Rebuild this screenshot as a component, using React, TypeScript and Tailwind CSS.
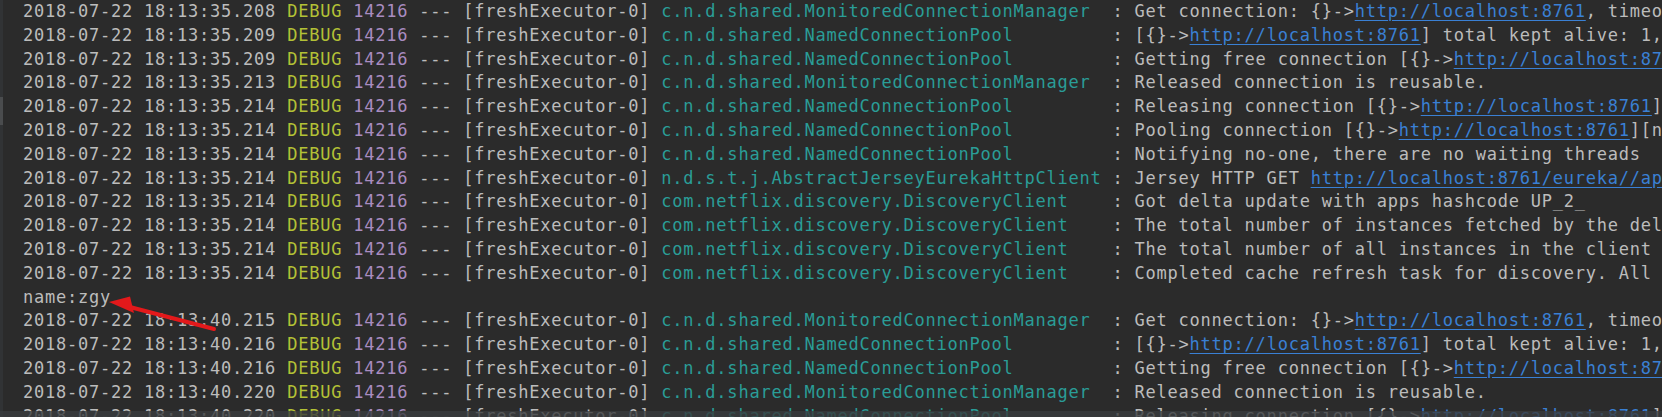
import React from "react";

type Part = string | { link: string };

type Row = {
  ts?: string;
  logger?: string;
  msg?: Part[];
  plain?: string;
};

const L = (s: string) => ({ link: s });

const rows: Row[] = [
  { ts: "2018-07-22 18:13:35.208", logger: "c.n.d.shared.MonitoredConnectionManager", msg: ["Get connection: {}->", L("http://localhost:8761"), ", timeout = 5000"] },
  { ts: "2018-07-22 18:13:35.209", logger: "c.n.d.shared.NamedConnectionPool", msg: ["[{}->", L("http://localhost:8761"), "] total kept alive: 1, total issued: 0, total allocated: 1 out of 200"] },
  { ts: "2018-07-22 18:13:35.209", logger: "c.n.d.shared.NamedConnectionPool", msg: ["Getting free connection [{}->", L("http://localhost:8761"), "][null]"] },
  { ts: "2018-07-22 18:13:35.213", logger: "c.n.d.shared.MonitoredConnectionManager", msg: ["Released connection is reusable."] },
  { ts: "2018-07-22 18:13:35.214", logger: "c.n.d.shared.NamedConnectionPool", msg: ["Releasing connection [{}->", L("http://localhost:8761"), "][null]"] },
  { ts: "2018-07-22 18:13:35.214", logger: "c.n.d.shared.NamedConnectionPool", msg: ["Pooling connection [{}->", L("http://localhost:8761"), "][null]; keep alive indefinitely"] },
  { ts: "2018-07-22 18:13:35.214", logger: "c.n.d.shared.NamedConnectionPool", msg: ["Notifying no-one, there are no waiting threads"] },
  { ts: "2018-07-22 18:13:35.214", logger: "n.d.s.t.j.AbstractJerseyEurekaHttpClient", msg: ["Jersey HTTP GET ", L("http://localhost:8761/eureka//apps/delta?"), "; statusCode=200"] },
  { ts: "2018-07-22 18:13:35.214", logger: "com.netflix.discovery.DiscoveryClient", msg: ["Got delta update with apps hashcode UP_2_"] },
  { ts: "2018-07-22 18:13:35.214", logger: "com.netflix.discovery.DiscoveryClient", msg: ["The total number of instances fetched by the delta processor : 0"] },
  { ts: "2018-07-22 18:13:35.214", logger: "com.netflix.discovery.DiscoveryClient", msg: ["The total number of all instances in the client now is 2"] },
  { ts: "2018-07-22 18:13:35.214", logger: "com.netflix.discovery.DiscoveryClient", msg: ["Completed cache refresh task for discovery. All Apps hash code is Local region apps hashcode: UP_2_"] },
  { plain: "name:zgy" },
  { ts: "2018-07-22 18:13:40.215", logger: "c.n.d.shared.MonitoredConnectionManager", msg: ["Get connection: {}->", L("http://localhost:8761"), ", timeout = 5000"] },
  { ts: "2018-07-22 18:13:40.216", logger: "c.n.d.shared.NamedConnectionPool", msg: ["[{}->", L("http://localhost:8761"), "] total kept alive: 1, total issued: 0, total allocated: 1 out of 200"] },
  { ts: "2018-07-22 18:13:40.216", logger: "c.n.d.shared.NamedConnectionPool", msg: ["Getting free connection [{}->", L("http://localhost:8761"), "][null]"] },
  { ts: "2018-07-22 18:13:40.220", logger: "c.n.d.shared.MonitoredConnectionManager", msg: ["Released connection is reusable."] },
  { ts: "2018-07-22 18:13:40.220", logger: "c.n.d.shared.NamedConnectionPool", msg: ["Releasing connection [{}->", L("http://localhost:8761"), "][null]"] },
];

function LogRow({ row }: { row: Row }) {
  if (row.plain !== undefined) {
    return <div className="h-[23.8px] leading-[23.8px] whitespace-pre text-[#bcbcbc]">{row.plain}</div>;
  }
  return (
    <div className="h-[23.8px] leading-[23.8px] whitespace-pre">
      <span className="text-[#bcbcbc]">{row.ts} </span>
      <span className="text-[#b3c136]">DEBUG</span>
      <span> </span>
      <span className="text-[#a98cc1]">14216</span>
      <span className="text-[#bcbcbc]"> --- [freshExecutor-0] </span>
      <span className="text-[#2a9d97]">{(row.logger || "").padEnd(40, " ")}</span>
      <span className="text-[#bcbcbc]"> : </span>
      {row.msg?.map((p, i) =>
        typeof p === "string" ? (
          <span key={i} className="text-[#bcbcbc]">{p}</span>
        ) : (
          <span key={i} className="text-[#3a80d4] underline underline-offset-[3px] decoration-[#3a80d4]">{p.link}</span>
        )
      )}
    </div>
  );
}

export default function App() {
  return (
    <div className="relative w-[1662px] h-[417px] overflow-hidden bg-[#2b2b2b] flex">
      <div className="w-[3px] h-full bg-[#313335] flex flex-col shrink-0">
        <div className="h-[97px]" />
        <div className="h-[28px] bg-[#4a4c4e]" />
      </div>
      <div
        className="flex-1 pl-[20px] pt-[0px] text-[17px] tracking-[0.77px] overflow-hidden"
        style={{ fontFamily: '"DejaVu Sans Mono", "Liberation Mono", monospace' }}
      >
        {rows.map((r, i) => (
          <LogRow key={i} row={r} />
        ))}
      </div>
      <div className="absolute left-0 right-0 bottom-0 h-[6px] bg-[#3a3c3e] opacity-80" />
      <svg className="absolute left-0 top-0 pointer-events-none" width="1662" height="417">
        <line x1="214" y1="329" x2="126" y2="306" stroke="#e3191b" strokeWidth="4" strokeLinecap="round" />
        <polygon points="109,302 130,296.5 134,313" fill="#e3191b" />
      </svg>
    </div>
  );
}
